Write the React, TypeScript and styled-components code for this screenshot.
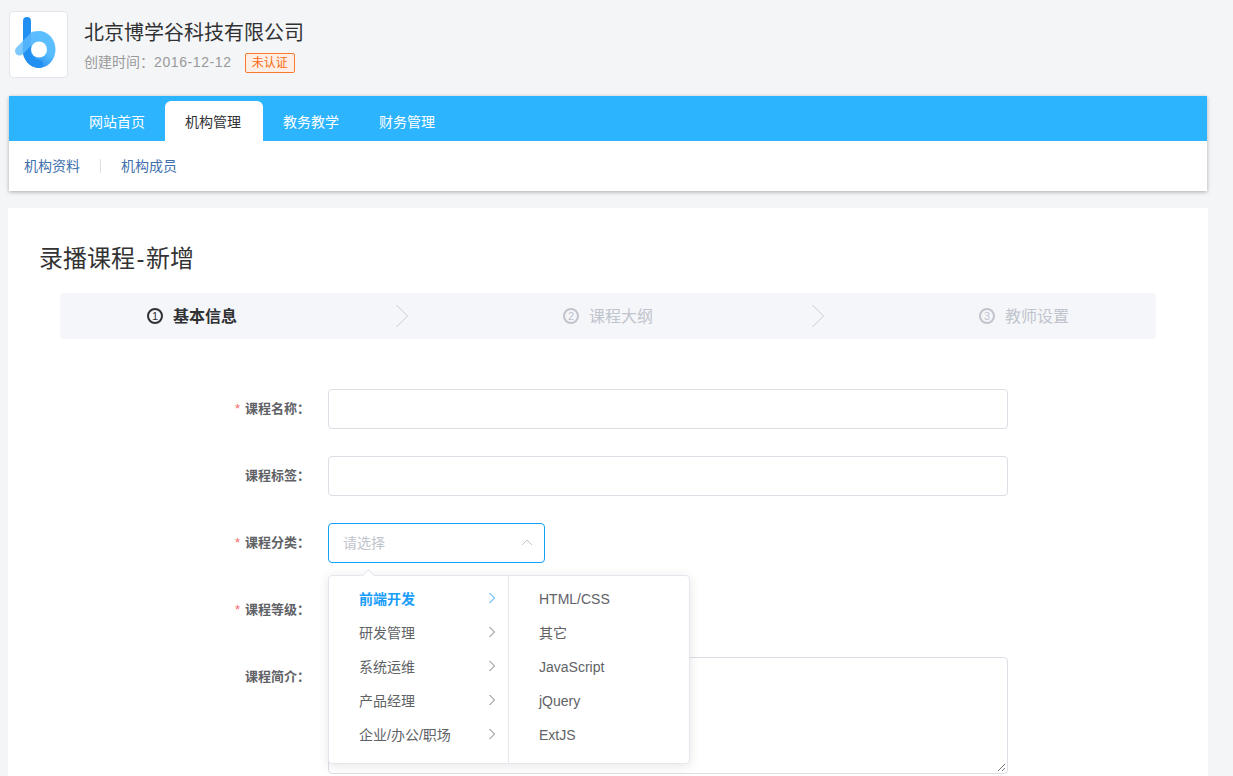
import React from 'react';
import styled, { createGlobalStyle } from 'styled-components';

const GlobalStyle = createGlobalStyle`
  html, body {
    margin: 0;
    height: 776px;
    overflow: hidden;
    background: #f4f5f7;
    font-family: "Liberation Sans", "Noto Sans CJK SC", sans-serif;
  }
`;

const Page = styled.div`
  width: 1200px;
  margin-left: 8px;
`;

const CompanyHeader = styled.header`
  display: flex;
  align-items: flex-start;
  height: 96px;
  padding-top: 11px;
  box-sizing: border-box;
`;

const LogoBox = styled.div`
  width: 59px;
  height: 67px;
  margin-left: 1px;
  box-sizing: border-box;
  background: #fff;
  border: 1px solid #e4e6eb;
  border-radius: 4px;
  display: flex;
  align-items: center;
  justify-content: center;
`;

const CompanyInfo = styled.div`
  margin-left: 16px;
  padding-top: 9px;
`;

const CompanyName = styled.div`
  font-size: 20px;
  line-height: 26px;
  color: #303133;
`;

const MetaRow = styled.div`
  display: flex;
  align-items: center;
  margin-top: 5px;
  font-size: 14px;
  line-height: 20px;
  color: #999;
`;

const MetaDate = styled.span`
  letter-spacing: 0.6px;
`;

const Badge = styled.span`
  margin: 2px 0 0 13px;
  height: 20px;
  padding: 0 6px;
  box-sizing: border-box;
  border: 1px solid #f97a2c;
  border-radius: 2px;
  background: #feeee5;
  color: #f9690e;
  font-size: 12px;
  line-height: 18px;
`;

const NavPanel = styled.nav`
  margin: 0 1px;
  background: #fff;
  box-shadow: 0 1px 4px rgba(0, 0, 0, 0.3);
`;

const TabBar = styled.div`
  height: 45px;
  padding: 5px 0 0 60px;
  box-sizing: border-box;
  background: #2db4ff;
  display: flex;
  align-items: stretch;
`;

const Tab = styled.div<{ $active?: boolean }>`
  padding: 0 ${p => (p.$active ? 22 : 20)}px 0 20px;
  font-size: 14px;
  line-height: 42px;
  border-radius: 6px 6px 0 0;
  color: ${p => (p.$active ? '#303133' : '#fff')};
  background: ${p => (p.$active ? '#fff' : 'transparent')};
`;

const SubBar = styled.div`
  height: 50px;
  padding-left: 15px;
  display: flex;
  align-items: center;
`;

const SubLink = styled.a`
  font-size: 14px;
  line-height: 14px;
  color: #3f70ac;
  & + & {
    margin-left: 20px;
    padding-left: 20px;
    border-left: 1px solid #dcdfe6;
  }
`;

const Card = styled.main`
  margin-top: 17px;
  height: 600px;
  background: #fff;
  padding: 31px 52px 0 31px;
  box-sizing: border-box;
`;

const Title = styled.h1`
  margin: 0;
  font-size: 24px;
  font-weight: 400;
  line-height: 40px;
  color: #333;
`;

const TitleDash = styled.span`
  padding: 0 1.5px;
`;

const Steps = styled.div`
  margin: 14px 0 50px 21px;
  height: 46px;
  background: #f5f6fa;
  border-radius: 4px;
  display: grid;
  grid-template-columns: 264px 152px 264px 152px 264px;
  align-items: center;
`;

const Step = styled.div<{ $active?: boolean }>`
  display: flex;
  align-items: center;
  justify-content: center;
  gap: 10px;
  padding-bottom: 3px;
  font-size: 16px;
  font-weight: ${p => (p.$active ? 700 : 400)};
  color: ${p => (p.$active ? '#303133' : '#c0c4cc')};
`;

const StepNum = styled.span<{ $active?: boolean }>`
  width: 16px;
  height: 16px;
  margin-top: 3px;
  box-sizing: border-box;
  border: 2px solid ${p => (p.$active ? '#303133' : '#c0c4cc')};
  border-radius: 50%;
  font-size: 11px;
  font-weight: 400;
  line-height: 12px;
  text-align: center;
`;

const StepSep = styled.div`
  display: flex;
  justify-content: center;
  padding-left: 4px;
`;

const FormRow = styled.div`
  position: relative;
  display: flex;
  align-items: flex-start;
  margin-bottom: 27px;
`;

const Label = styled.label<{ $required?: boolean }>`
  width: 289px;
  height: 40px;
  padding-right: 18px;
  box-sizing: border-box;
  text-align: right;
  font-size: 13px;
  font-weight: 700;
  line-height: 40px;
  color: #606266;
  &::before {
    content: ${p => (p.$required ? '"*"' : 'none')};
    margin-right: 5px;
    color: #f56c6c;
    font-weight: 400;
  }
`;

const TextInput = styled.div<{ $width?: number }>`
  width: ${p => p.$width ?? 680}px;
  height: 40px;
  box-sizing: border-box;
  border: 1px solid #dcdfe6;
  border-radius: 4px;
  background: #fff;
`;

const Select = styled.div`
  width: 217px;
  height: 40px;
  box-sizing: border-box;
  border: 1px solid #13a0f8;
  border-radius: 4px;
  padding: 0 11px 2px 14px;
  display: flex;
  align-items: center;
  justify-content: space-between;
  font-size: 14px;
  color: #c0c4cc;
`;

const TextArea = styled.div`
  position: relative;
  width: 680px;
  height: 117px;
  box-sizing: border-box;
  border: 1px solid #dcdfe6;
  border-radius: 4px;
`;

const ResizeGrip = styled.svg`
  position: absolute;
  right: 1px;
  bottom: 1px;
`;

const Cascader = styled.div`
  position: absolute;
  left: 289px;
  top: 52px;
  z-index: 2;
  width: 362px;
  height: 189px;
  box-sizing: border-box;
  display: flex;
  background: #fff;
  border: 1px solid #e4e7ed;
  border-radius: 4px;
  box-shadow: 0 2px 12px rgba(0, 0, 0, 0.1);
  &::before {
    content: '';
    position: absolute;
    left: 35px;
    top: -5px;
    width: 8px;
    height: 8px;
    background: #fff;
    border-left: 1px solid #e4e7ed;
    border-top: 1px solid #e4e7ed;
    transform: rotate(45deg);
  }
`;

const Column = styled.ul<{ $width: number }>`
  margin: 0;
  padding: 6px 0;
  list-style: none;
  width: ${p => p.$width}px;
  box-sizing: border-box;
  & + & {
    border-left: 1px solid #e4e7ed;
  }
`;

const Option = styled.li<{ $active?: boolean; $cjk?: boolean }>`
  height: 34px;
  padding: 0 12px ${p => (p.$cjk ? 2 : 0)}px 30px;
  box-sizing: border-box;
  display: flex;
  align-items: center;
  justify-content: space-between;
  font-size: 14px;
  font-weight: ${p => (p.$active ? 700 : 400)};
  color: ${p => (p.$active ? '#1a9efa' : '#606266')};
`;

const categories = ['前端开发', '研发管理', '系统运维', '产品经理', '企业/办公/职场'];
const children = ['HTML/CSS', '其它', 'JavaScript', 'jQuery', 'ExtJS'];

function Logo() {
  return (
    <svg width="57" height="65" viewBox="0 0 57 65">
      <defs>
        <linearGradient id="ring" x1="0.85" y1="0.1" x2="0.3" y2="1">
          <stop offset="0" stopColor="#5cc0ff" />
          <stop offset="0.45" stopColor="#58bcff" />
          <stop offset="1" stopColor="#1a84ea" />
        </linearGradient>
      </defs>
      <ellipse cx="29" cy="37.5" rx="16.5" ry="18.5" fill="url(#ring)" />
      <path d="M17 9 V37.5 A12 14.5 0 0 0 29 52" fill="none" stroke="#2290f2" strokeWidth="8" strokeLinecap="round" />
      <path d="M9.5 39 L24 24" stroke="#5ebcff" strokeWidth="9" strokeLinecap="round" opacity="0.8" />
      <circle cx="29" cy="37.5" r="8" fill="#fff" />
    </svg>
  );
}

function Chevron({ color = '#909399' }: { color?: string }) {
  return (
    <svg width="8" height="12" viewBox="0 0 8 12">
      <path d="M1.5 1 L6.5 6 L1.5 11" fill="none" stroke={color} strokeWidth="1" />
    </svg>
  );
}

function StepArrow() {
  return (
    <svg width="14" height="24" viewBox="0 0 14 24">
      <path d="M1.5 1 L12.5 12 L1.5 23" fill="none" stroke="#c8ccd3" strokeWidth="1" />
    </svg>
  );
}

export default function App() {
  return (
    <Page>
      <GlobalStyle />
      <CompanyHeader>
        <LogoBox><Logo /></LogoBox>
        <CompanyInfo>
          <CompanyName>北京博学谷科技有限公司</CompanyName>
          <MetaRow>创建时间：<MetaDate>2016-12-12</MetaDate><Badge>未认证</Badge></MetaRow>
        </CompanyInfo>
      </CompanyHeader>
      <NavPanel>
        <TabBar>
          <Tab>网站首页</Tab>
          <Tab $active>机构管理</Tab>
          <Tab>教务教学</Tab>
          <Tab>财务管理</Tab>
        </TabBar>
        <SubBar>
          <SubLink>机构资料</SubLink>
          <SubLink>机构成员</SubLink>
        </SubBar>
      </NavPanel>
      <Card>
        <Title>录播课程<TitleDash>-</TitleDash>新增</Title>
        <Steps>
          <Step $active><StepNum $active>1</StepNum>基本信息</Step>
          <StepSep><StepArrow /></StepSep>
          <Step><StepNum>2</StepNum>课程大纲</Step>
          <StepSep><StepArrow /></StepSep>
          <Step><StepNum>3</StepNum>教师设置</Step>
        </Steps>
        <FormRow>
          <Label $required>课程名称：</Label>
          <TextInput />
        </FormRow>
        <FormRow>
          <Label>课程标签：</Label>
          <TextInput />
        </FormRow>
        <FormRow>
          <Label $required>课程分类：</Label>
          <Select>
            请选择
            <svg width="12" height="7" viewBox="0 0 12 7">
              <path d="M1 6 L6 1 L11 6" fill="none" stroke="#c0c4cc" strokeWidth="1" />
            </svg>
          </Select>
          <Cascader>
            <Column $width={179}>
              {categories.map((name, i) => (
                <Option key={name} $cjk $active={i === 0}>
                  {name}
                  <Chevron color={i === 0 ? '#1a9efa' : '#777'} />
                </Option>
              ))}
            </Column>
            <Column $width={181}>
              {children.map(name => <Option key={name} $cjk={name === '其它'}>{name}</Option>)}
            </Column>
          </Cascader>
        </FormRow>
        <FormRow>
          <Label $required>课程等级：</Label>
          <TextInput $width={217} />
        </FormRow>
        <FormRow>
          <Label>课程简介：</Label>
          <TextArea>
            <ResizeGrip width="9" height="9" viewBox="0 0 9 9">
              <path d="M1 8 L8 1 M5 8 L8 5" stroke="#777" strokeWidth="1" />
            </ResizeGrip>
          </TextArea>
        </FormRow>
      </Card>
    </Page>
  );
}
